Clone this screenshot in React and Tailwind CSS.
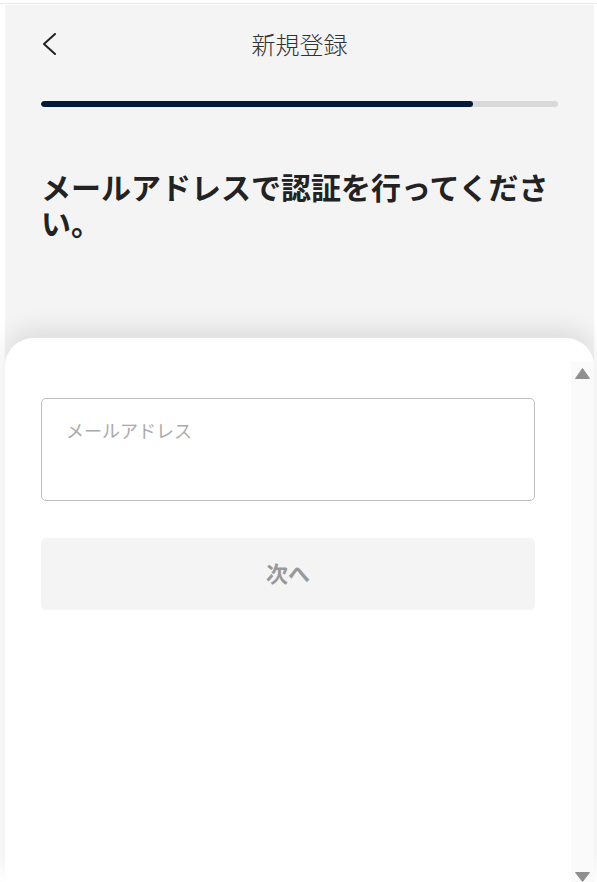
import React from "react";

export default function App() {
    return (
        <div className="min-h-screen bg-white pt-[3px] font-['Noto_Sans_CJK_JP',sans-serif]">
            <div className="h-px bg-[#fbe3dc]" />
            <div className="ml-[5px] mr-[3px] mt-px h-[877px] bg-[#f4f4f4] flex flex-col">
                {/* Header */}
                <div className="h-[78px] px-9 grid grid-cols-[1fr_auto_1fr] items-center">
                    <button className="w-6 h-6 flex items-center">
                        <svg width="16" height="22" viewBox="0 0 16 22" fill="none">
                            <polyline points="14,1 3,11 14,21" stroke="#222" strokeWidth="2" strokeLinecap="round" strokeLinejoin="round" />
                        </svg>
                    </button>
                    <h1 className="text-[24px] font-light text-[#333]">新規登録</h1>
                    <div />
                </div>

                {/* Progress */}
                <div className="mx-9 mt-[18px] h-[6px] rounded-full bg-[#d9d9d9] overflow-hidden">
                    <div className="h-full bg-[#001a3a] rounded-full" style={{ width: `${(431 / 516) * 100}%` }} />
                </div>

                <h2 className="mx-9 mt-[61px] text-[30px] leading-[36px] font-bold text-[#222]">
                    メールアドレスで認証を行ってください。
                </h2>

                {/* Card */}
                <div className="mt-[98px] flex-1 flex bg-white rounded-t-[28px] shadow-[0_-10px_22px_rgba(0,0,0,0.09)]">
                    <div className="flex-1 px-9 pt-[60px]">
                        <textarea
                            placeholder="メールアドレス"
                            className="block w-full h-[103px] resize-none border border-[#bdbdbd] rounded-[5px] pl-[24px] pr-6 pt-[18px] text-[18px] text-[#333] placeholder:text-[#aaa] outline-none"
                        />
                        <button disabled className="mt-[37px] w-full h-[72px] rounded-[5px] bg-[#f4f4f4] text-[22px] font-bold text-[#999] pb-[3px]">
                            次へ
                        </button>
                    </div>
                    <div className="w-[23px] mt-6 bg-[#fafafa] flex flex-col items-center justify-between pt-[6px]">
                        <svg width="15" height="11" viewBox="0 0 15 11">
                            <polygon points="7.5,0.5 14.5,10.5 0.5,10.5" fill="#8f8f8f" strokeLinejoin="round" stroke="#8f8f8f" />
                        </svg>
                        <svg width="15" height="10" viewBox="0 0 15 10">
                            <polygon points="0.5,0.5 14.5,0.5 7.5,9.5" fill="#8f8f8f" strokeLinejoin="round" stroke="#8f8f8f" />
                        </svg>
                    </div>
                </div>
            </div>
        </div>
    );
}
